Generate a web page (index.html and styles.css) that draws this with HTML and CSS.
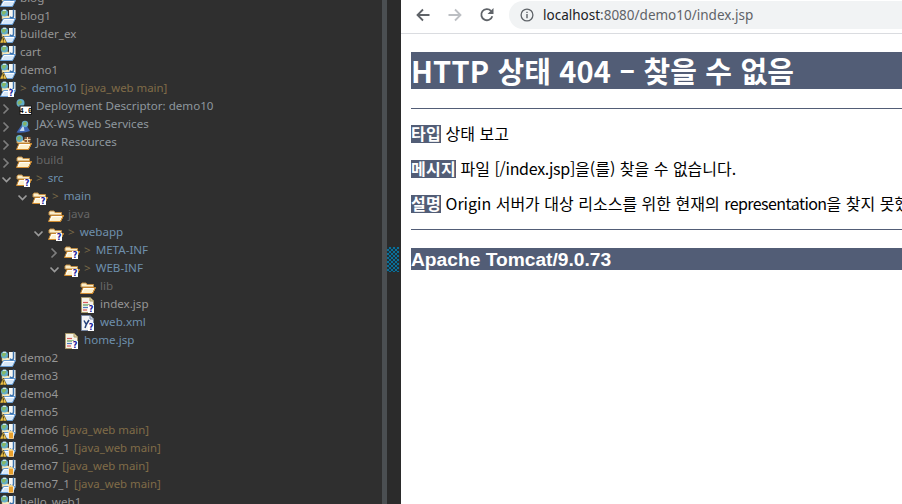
FILE: index.html
```html
<!DOCTYPE html>
<html lang="ko">
<head>
<meta charset="utf-8">
<title>HTTP 상태 404 – 찾을 수 없음</title>
<link rel="stylesheet" href="styles.css">
</head>
<body>
<svg class="defs" width="0" height="0" aria-hidden="true">
  <symbol id="proj" viewBox="0 0 16 16">
    <path d="M2 6h5l1 1h6v3H2z" fill="#f6e9bd" stroke="#a8975e" stroke-width=".6"/>
    <path d="M.5 15.500 3.500 9.500h12l-3 6z" fill="#d6e8f9" stroke="#659bd4" stroke-width="1"/>
    <path d="M1.800 14.500 4.200 10.500h9.800" fill="none" stroke="#fff" stroke-width="1"/>
    <circle cx="4.500" cy="4" r="3.600" fill="#62aecb"/>
    <path d="M1.500 3 4.500 1.200 6.500 3 4.300 5.800 2.500 5.500z" fill="#86b868"/>
    <path d="M3 1.300h3" stroke="#eef6f8" stroke-width="1"/>
    <rect x="9" y="1" width="6.500" height="8" fill="#f8f8f4"/>
    <path d="M13.500 .5v6.500q0 1.800-1.800 1.800-1.300 0-1.800-1.200" fill="none" stroke="#3c73ad" stroke-width="1.500"/>
  </symbol>
  <symbol id="warn" viewBox="0 0 16 16">
    <path d="M3.300 9 6.800 16H-.200z" fill="#f3c64a" stroke="#4a3a10" stroke-width=".6"/>
    <path d="M3.300 11.300v2.400M3.300 14.500v1" stroke="#33280a" stroke-width="1"/>
  </symbol>
  <symbol id="help" viewBox="0 0 16 16">
    <rect x="8" y="8" width="6" height="8" fill="#fff"/>
    <text x="11" y="15.300" class="mark">?</text>
  </symbol>
  <symbol id="jar" viewBox="0 0 16 16">
    <rect x="8.500" y="9" width="5" height="7" rx="1" fill="#e9a12e" stroke="#fff" stroke-width=".7"/>
    <rect x="9.500" y="8" width="3" height="1.500" fill="#f6d98a"/>
  </symbol>
  <symbol id="folder" viewBox="0 0 16 16">
    <path d="M1 5 2 4h4l1 1.500h6.500v2.500H1z" fill="#fbeecb" stroke="#c08c42"/>
    <path d="M.5 14.500 3 8.500h12.500l-3 6z" fill="#fdf1cd" stroke="#c4842e"/>
    <path d="M1 14.500h11.500l3-6" fill="none" stroke="#d28c30" stroke-width="1"/>
    <path d="M2.300 13.300 4 9.600h9.500" fill="none" stroke="#fff" stroke-width="1"/>
  </symbol>
  <symbol id="jsp" viewBox="0 0 16 16">
    <path d="M1.500 .5h8.500l3.500 3.500v11.500h-12z" fill="#f6f3e8" stroke="#a99a6a"/>
    <path d="M10 .5v3.500h3.500" fill="#e9d9a0" stroke="#a99a6a"/>
    <path d="M3 5.500h5" stroke="#d85a5a" stroke-width="1.200"/>
    <path d="M3 8h7" stroke="#5a9a5a" stroke-width="1.200"/>
    <path d="M3 10.500h5" stroke="#4a7ac0" stroke-width="1.200"/>
    <path d="M3 13h4" stroke="#d85a5a" stroke-width="1.200"/>
  </symbol>
  <symbol id="xml" viewBox="0 0 16 16">
    <path d="M1.500 .5h8.500l3.500 3.500v11.500h-12z" fill="#f4f4f6" stroke="#7a8aa6"/>
    <path d="M10 .5v3.500h3.500" fill="#d7deea" stroke="#7a8aa6"/>
    <path d="M4 5.500 6.300 9.500 9 5M6.300 9.500 5 13" fill="none" stroke="#24407a" stroke-width="1.500"/>
  </symbol>
  <symbol id="dd" viewBox="0 0 16 16">
    <circle cx="4.500" cy="4" r="4" fill="#62aecb"/>
    <path d="M1.500 3 4.500 1 6.500 3 4 5.500 2 5.500z" fill="#86b264"/>
    <rect x="4" y="7" width="11.500" height="8.500" fill="#fff" stroke="#1c1c1c" stroke-width="1"/>
    <text x="9.800" y="14" class="ver">4.0</text>
  </symbol>
  <symbol id="ws" viewBox="0 0 16 16">
    <path d="M.5 15.500 8 4.500l6 9.500q-6 2.500-13.500 1.500z" fill="#3f66b4"/>
    <path d="M3.500 14 7.500 8 8.500 14z" fill="#c4d8f2"/>
    <circle cx="9" cy="7" r="3.200" fill="#62aecb"/>
    <path d="M7 6 9 4.500 11 6 9.500 8.500 7.500 8.500z" fill="#86b264"/>
  </symbol>
  <symbol id="res" viewBox="0 0 16 16">
    <use href="#folder"/>
    <circle cx="3.500" cy="3.500" r="3.500" fill="#62aecb"/>
    <path d="M1 2.500 3.500 1 5.500 3 3.500 5 1.500 5z" fill="#86b264"/>
    <path d="M8.500 2h6v5h-6z" fill="#8a5a3a"/>
    <path d="M11.500 2v5M8.500 4.500h6" stroke="#e8d8b0" stroke-width="1"/>
  </symbol>
  <symbol id="right" viewBox="0 0 16 16">
    <path d="M3.500 5.500 8 10 3.500 14.500" fill="none" stroke="#7d7d7d" stroke-width="1.700"/>
  </symbol>
  <symbol id="down" viewBox="0 0 16 16">
    <path d="M2.500 6.500 6.500 10.500 10.500 6.500" fill="none" stroke="#9a9a9a" stroke-width="1.700"/>
  </symbol>
</svg>

<div class="screen">
  <aside class="explorer">
    <div class="tree">
      <div class="row d0"><svg class="ico"><use href="#proj"/></svg><span class="name">blog</span></div>
      <div class="row d0"><svg class="ico"><use href="#proj"/></svg><span class="name">blog1</span></div>
      <div class="row d0"><svg class="ico"><use href="#proj"/><use href="#warn"/></svg><span class="name">builder_ex</span></div>
      <div class="row d0"><svg class="ico"><use href="#proj"/></svg><span class="name">cart</span></div>
      <div class="row d0"><svg class="ico"><use href="#proj"/><use href="#warn"/></svg><span class="name">demo1</span></div>
      <div class="row d0"><svg class="ico"><use href="#proj"/><use href="#help"/></svg><span class="dirty">&gt;</span><span class="name blue">demo10</span><span class="deco">[java_web main]</span></div>
      <div class="row d1"><svg class="tw"><use href="#right"/></svg><svg class="ico"><use href="#dd"/></svg><span class="name soft">Deployment Descriptor: demo10</span></div>
      <div class="row d1"><svg class="tw"><use href="#right"/></svg><svg class="ico"><use href="#ws"/></svg><span class="name soft">JAX-WS Web Services</span></div>
      <div class="row d1"><svg class="tw"><use href="#right"/></svg><svg class="ico"><use href="#res"/></svg><span class="name soft">Java Resources</span></div>
      <div class="row d1"><svg class="tw"><use href="#right"/></svg><svg class="ico"><use href="#folder"/></svg><span class="name dim">build</span></div>
      <div class="row d1"><svg class="tw"><use href="#down"/></svg><svg class="ico"><use href="#folder"/><use href="#help"/></svg><span class="dirty">&gt;</span><span class="name blue">src</span></div>
      <div class="row d2"><svg class="tw"><use href="#down"/></svg><svg class="ico"><use href="#folder"/><use href="#help"/></svg><span class="dirty">&gt;</span><span class="name blue">main</span></div>
      <div class="row d3"><span class="tw"></span><svg class="ico"><use href="#folder"/></svg><span class="name dim">java</span></div>
      <div class="row d3"><svg class="tw"><use href="#down"/></svg><svg class="ico"><use href="#folder"/><use href="#help"/></svg><span class="dirty">&gt;</span><span class="name blue">webapp</span></div>
      <div class="row d4"><svg class="tw"><use href="#right"/></svg><svg class="ico"><use href="#folder"/><use href="#help"/></svg><span class="dirty">&gt;</span><span class="name blue">META-INF</span></div>
      <div class="row d4"><svg class="tw"><use href="#down"/></svg><svg class="ico"><use href="#folder"/><use href="#help"/></svg><span class="dirty">&gt;</span><span class="name blue">WEB-INF</span></div>
      <div class="row d5"><span class="tw"></span><svg class="ico"><use href="#folder"/></svg><span class="name dim">lib</span></div>
      <div class="row d5"><span class="tw"></span><svg class="ico"><use href="#jsp"/><use href="#help"/></svg><span class="name">index.jsp</span></div>
      <div class="row d5"><span class="tw"></span><svg class="ico"><use href="#xml"/><use href="#help"/></svg><span class="name blue">web.xml</span></div>
      <div class="row d4"><span class="tw"></span><svg class="ico"><use href="#jsp"/><use href="#help"/></svg><span class="name blue">home.jsp</span></div>
      <div class="row d0"><svg class="ico"><use href="#proj"/></svg><span class="name">demo2</span></div>
      <div class="row d0"><svg class="ico"><use href="#proj"/><use href="#warn"/></svg><span class="name">demo3</span></div>
      <div class="row d0"><svg class="ico"><use href="#proj"/><use href="#warn"/></svg><span class="name">demo4</span></div>
      <div class="row d0"><svg class="ico"><use href="#proj"/><use href="#warn"/></svg><span class="name">demo5</span></div>
      <div class="row d0"><svg class="ico"><use href="#proj"/><use href="#warn"/><use href="#jar"/></svg><span class="name">demo6</span><span class="deco">[java_web main]</span></div>
      <div class="row d0"><svg class="ico"><use href="#proj"/><use href="#warn"/><use href="#jar"/></svg><span class="name">demo6_1</span><span class="deco">[java_web main]</span></div>
      <div class="row d0"><svg class="ico"><use href="#proj"/><use href="#jar"/></svg><span class="name">demo7</span><span class="deco">[java_web main]</span></div>
      <div class="row d0"><svg class="ico"><use href="#proj"/><use href="#jar"/></svg><span class="name">demo7_1</span><span class="deco">[java_web main]</span></div>
      <div class="row d0"><svg class="ico"><use href="#proj"/></svg><span class="name">hello_web1</span></div>
    </div>
  </aside>
  <div class="sash"></div>
  <div class="gutter"><div class="marker"></div></div>
  <main class="browser">
    <header class="toolbar">
      <svg class="nav" viewBox="0 0 16 16"><path d="M14.500 8H3M8 2.500 2.500 8 8 13.500" fill="none" stroke="#5f6368" stroke-width="1.800"/></svg>
      <svg class="nav" viewBox="0 0 16 16"><path d="M1.500 8H13M8 2.500 13.500 8 8 13.500" fill="none" stroke="#bcbfc3" stroke-width="1.800"/></svg>
      <svg class="nav" viewBox="0 0 16 16"><path d="M13.300 9.200A5.600 5.600 0 1 1 12 3.800" fill="none" stroke="#5f6368" stroke-width="1.800"/><path d="M14.500 1v6h-6z" fill="#5f6368"/></svg>
      <div class="omnibox">
        <svg class="info" viewBox="0 0 14 14"><circle cx="7" cy="7" r="5.900" fill="none" stroke="#5f6368" stroke-width="1.300"/><path d="M7 6v4.200M7 3.700v1.300" stroke="#5f6368" stroke-width="1.400"/></svg>
        <span class="url"><span class="host">localhost</span>:8080/demo10/index.jsp</span>
      </div>
    </header>
    <article class="page">
      <h1>HTTP 상태 404 – 찾을 수 없음</h1>
      <hr>
      <p><b>타입</b> 상태 보고</p>
      <p><b>메시지</b> 파일 <span class="path">[/index.jsp]</span>을(를) 찾을 수 없습니다.</p>
      <p><b>설명</b> Origin 서버가 대상 리소스를 위한 현재의 <span class="word">representation</span>을 찾지 못했거나, 그것이 존재하는지를 밝히려 하지 않습니다.</p>
      <hr>
      <h3>Apache Tomcat/9.0.73</h3>
    </article>
  </main>
</div>
</body>
</html>
```
FILE: styles.css
```css
* { box-sizing: border-box; }
html, body { margin: 0; height: 100%; }
body { overflow: hidden; background: #fff; }
.defs { position: absolute; }
.mark { font: bold 8px "DejaVu Sans", sans-serif; fill: #1a1a9a; text-anchor: middle; }
.ver { font: bold 7px "DejaVu Sans Mono", monospace; fill: #111; text-anchor: middle; }

.screen { display: flex; width: 902px; height: 504px; overflow: hidden; }

.explorer { flex: none; width: 382px; height: 504px; background: #2f2f2f; overflow: hidden; }
.tree { margin-top: -10px; }
.row { display: flex; align-items: center; height: 18px; white-space: nowrap; font: 11.600px/18px "Noto Sans", "Open Sans", sans-serif; color: #969696; }
.d1 { padding-left: 0; }
.d2 { padding-left: 16px; }
.d3 { padding-left: 32px; }
.d4 { padding-left: 48px; }
.d5 { padding-left: 64px; }
.tw { flex: none; width: 16px; height: 16px; }
.ico { flex: none; width: 16px; height: 16px; margin-right: 4px; overflow: hidden; }
.name, .dirty, .deco { margin-bottom: 2px; }
.name.blue { color: #6e90ad; }
.name.soft { color: #8e979e; }
.name.dim { color: #666; }
.dirty { color: #7b6a48; margin-right: 5px; }
.deco { color: #806c48; margin-left: 4px; font-size: 11.400px; }

.sash { flex: none; width: 5px; background: #4b4f52; }
.gutter { flex: none; width: 14px; background: #2b2b2b; padding-top: 247px; }
.marker { width: 12px; height: 25px; background: repeating-conic-gradient(#0b6f99 0 25%, #1d3038 0 50%) 0 0 / 4px 4px; }

.browser { flex: none; width: 501px; height: 504px; overflow: hidden; background: #fff; }
.toolbar { display: flex; align-items: center; height: 34px; padding: 0 0 4px 14px; border-bottom: 1px solid #dadce0; }
.nav { flex: none; width: 16px; height: 16px; margin-right: 16px; }
.omnibox { flex: 1; display: flex; align-items: center; height: 28px; margin-left: -2px; margin-right: -20px; padding-left: 11px; border-radius: 14px; background: #f1f3f4; }
.info { flex: none; width: 14px; height: 14px; margin-right: 9px; }
.url { font: 13.500px "Noto Sans", sans-serif; color: #5f6368; white-space: nowrap; }
.host { color: #202124; }

.page { padding: 18px 0 0 10px; white-space: nowrap; overflow: hidden; font-family: "Noto Sans CJK KR", sans-serif; color: #000; }
h1 { margin: 0 0 19px; height: 37px; font-size: 29px; line-height: 37px; letter-spacing: .15px; font-weight: bold; color: #fff; background: #525d76; overflow: hidden; }
hr { height: 1px; margin: 0 0 16px; border: 0; background: #525d76; }
p { margin: 0 0 17px; height: 18px; font-size: 16px; line-height: 16px; }
p:last-of-type { margin-bottom: 16px; }
b { display: inline-block; padding-bottom: 2px; line-height: 16px; letter-spacing: .3px; color: #fff; background: #525d76; }
.path { letter-spacing: -.3px; }
.word { letter-spacing: -.55px; }
h3 { margin: 18px 0 0; height: 22px; font-family: "Liberation Sans", sans-serif; font-size: 19.200px; line-height: 23px; font-weight: bold; color: #fff; background: #525d76; overflow: hidden; }
```
